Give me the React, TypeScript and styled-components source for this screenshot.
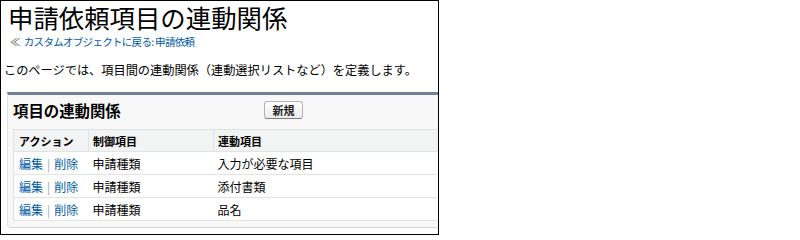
import styled, { createGlobalStyle } from "styled-components";

const rows = [
  { control: "申請種類", dependent: "入力が必要な項目" },
  { control: "申請種類", dependent: "添付書類" },
  { control: "申請種類", dependent: "品名" },
];

const GlobalStyle = createGlobalStyle`
  html, body {
    margin: 0;
    padding: 0;
    background: #ffffff;
  }
  body {
    font-family: "Noto Sans CJK JP", "Liberation Sans", sans-serif;
    color: #000;
  }
`;

export default function App() {
  return (
    <>
      <GlobalStyle />
      <Frame>
        <Title>申請依頼項目の連動関係</Title>
        <Breadcrumb>
          <span>≪</span>
          <Link>カスタムオブジェクトに戻る: 申請依頼</Link>
        </Breadcrumb>
        <Description>
          このページでは、項目間の連動関係（連動選択リストなど）を定義します。
        </Description>
        <Panel>
          <PanelHeader>
            <PanelTitle>項目の連動関係</PanelTitle>
            <Button>新規</Button>
          </PanelHeader>
          <Table>
            <colgroup>
              <col style={{ width: 75 }} />
              <col style={{ width: 125 }} />
              <col />
            </colgroup>
            <thead>
              <tr>
                <Th>アクション</Th>
                <Th>制御項目</Th>
                <Th>連動項目</Th>
              </tr>
            </thead>
            <tbody>
              {rows.map((r, i) => (
                <tr key={i}>
                  <Td>
                    <Link>編集</Link>
                    <Pipe>|</Pipe>
                    <Link>削除</Link>
                  </Td>
                  <Td>{r.control}</Td>
                  <Td>{r.dependent}</Td>
                </tr>
              ))}
            </tbody>
          </Table>
        </Panel>
      </Frame>
    </>
  );
}

const Frame = styled.div`
  width: 439px;
  height: 235px;
  box-sizing: border-box;
  border: 1px solid #000;
  overflow: hidden;
  background: #fff;
`;

const Title = styled.h1`
  margin: 1px 0 0 7px;
  font-size: 25.4px;
  font-weight: 400;
  line-height: 30px;
  color: #000;
`;

const Breadcrumb = styled.div`
  margin: 3px 0 0 9px;
  font-size: 10.5px;
  line-height: 14px;
  letter-spacing: -0.7px;
  color: #555;
  display: flex;
  gap: 4px;
`;

const Link = styled.a`
  color: #015ba7;
  text-decoration: none;
  cursor: pointer;
`;

const Description = styled.p`
  margin: 13px 0 0 3px;
  font-size: 12.2px;
  line-height: 16px;
  color: #000;
`;

const Panel = styled.section`
  margin: 14px 0 0 6px;
  width: 460px;
  background: #f8f8f8;
  border-top: 3px solid #747e96;
  border-left: 1px solid #e0e3e5;
  border-bottom: 1px solid #d4d6d8;
  border-bottom-left-radius: 4px;
  padding-bottom: 6px;
`;

const PanelHeader = styled.div`
  display: flex;
  align-items: center;
  height: 29px;
  padding-left: 5px;
`;

const PanelTitle = styled.h2`
  margin: 0;
  width: 251px;
  font-size: 15.4px;
  font-weight: 700;
  line-height: 18px;
  color: #000;
`;

const Button = styled.button`
  width: 39px;
  height: 18px;
  padding: 0;
  font-family: inherit;
  font-size: 11px;
  font-weight: 700;
  line-height: 14px;
  color: #222;
  background: linear-gradient(#ffffff, #ececec);
  border: 1px solid #b5b5b5;
  border-bottom-color: #7f7f7f;
  border-radius: 3px;
`;

const Table = styled.table`
  margin: 5px 0 0 5px;
  width: 440px;
  table-layout: fixed;
  border-collapse: collapse;
  background: #fff;
  border: 1px solid #e0e3e5;
`;

const Th = styled.th`
  height: 21px;
  padding: 0 0 0 4px;
  text-align: left;
  font-size: 11px;
  font-weight: 700;
  color: #000;
  background: #f2f3f3;
  border-left: 1px solid #e0e3e5;
  border-bottom: 1px solid #e0e3e5;
  &:first-child {
    border-left: none;
    padding-left: 5px;
  }
`;

const Td = styled.td`
  height: 22px;
  padding: 0 0 0 4px;
  font-size: 12px;
  color: #000;
  border-bottom: 1px solid #e3e3e3;
  white-space: nowrap;
  &:first-child {
    padding-left: 5px;
  }
`;

const Pipe = styled.span`
  margin: 0 4px;
  color: #a0a8b0;
`;
